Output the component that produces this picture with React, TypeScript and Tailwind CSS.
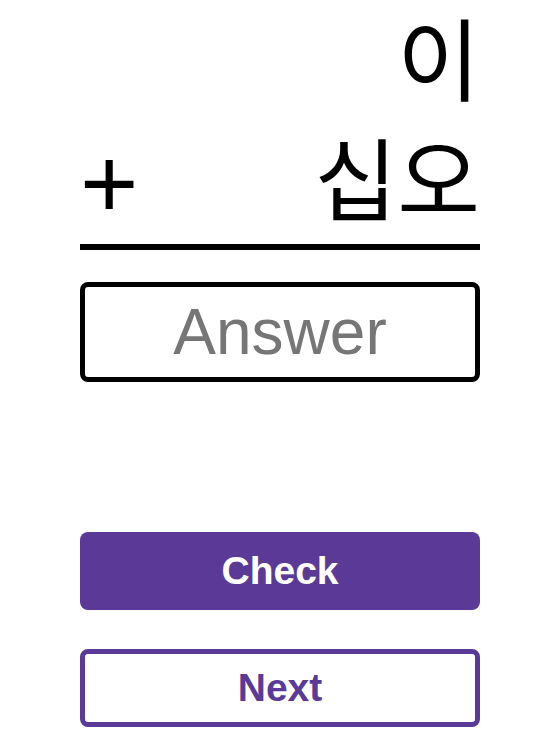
import React, { useState } from "react";

const FONT = "font-['Liberation_Sans','Noto_Sans_CJK_KR',sans-serif]";

const App: React.FC = () => {
  const [answer, setAnswer] = useState("");

  return (
    <div className={`min-h-screen bg-white ${FONT}`}>
      <div className="ml-[80px] w-[400px] flex flex-col">
        <div className="h-[120px] flex items-end justify-end text-[90px] leading-[114px] text-black">
          이
        </div>
        <div className="h-[120px] flex items-end justify-between text-[90px] leading-[114px] text-black">
          <span className="text-[100px]">+</span>
          <span>십오</span>
        </div>
        <div className="mt-[4px] h-[6px] bg-black" />

        <input
          value={answer}
          onChange={(e) => setAnswer(e.target.value)}
          placeholder="Answer"
          className="mt-[32px] h-[100px] w-full border-[5px] border-black rounded-lg text-center text-[64px] text-black placeholder:text-[#767676] outline-none"
        />

        <button className="mt-[150px] h-[78px] w-full rounded-lg bg-[#5a3a96] text-white font-bold text-[39px]">
          Check
        </button>
        <button className="mt-[39px] h-[78px] w-full rounded-lg border-[5px] border-[#5a3a96] bg-white text-[#5a3a96] font-bold text-[39px]">
          Next
        </button>
      </div>
    </div>
  );
};

export default App;
